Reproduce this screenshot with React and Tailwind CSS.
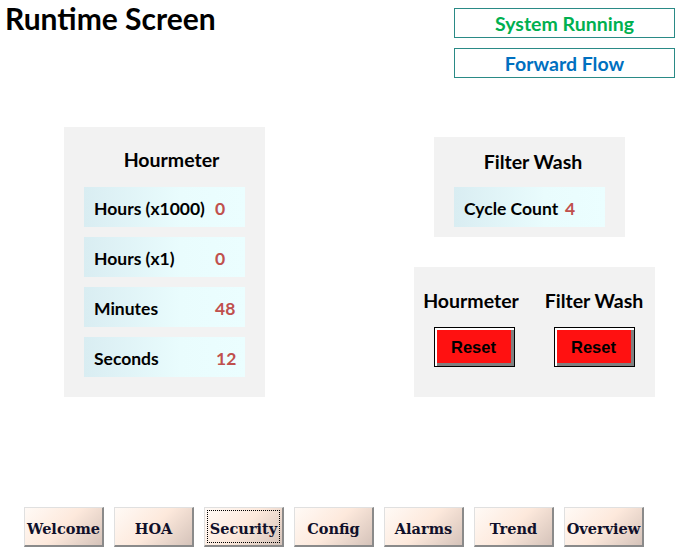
import React from "react";

const lato = { fontFamily: "Lato, 'Noto Sans', sans-serif" };

function Row({ label, value, valueLeft }) {
  return (
    <div className="h-[40px] flex items-center pt-[4px] bg-[linear-gradient(90deg,#d9edf2_0%,#e9fcfd_60%,#ebfeff_100%)] relative">
      <span className="pl-[10px] text-[17.5px] font-bold text-black">{label}</span>
      <span
        className="absolute text-[17.5px] font-bold text-[#c0504d]"
        style={{ left: valueLeft }}
      >
        {value}
      </span>
    </div>
  );
}

function ResetButton() {
  return (
    <div className="w-[81px] h-[40px] border border-black bg-[#808080] p-0">
      <div className="w-full h-full border-t-[2px] border-l-[2px] border-t-white border-l-white">
        <div className="w-[74px] h-[33px] bg-[#ff1111] flex items-center justify-center pt-[1px] text-[16.5px] font-bold text-black" style={{ fontFamily: "'Liberation Sans', Arial, sans-serif" }}>
          Reset
        </div>
      </div>
    </div>
  );
}

function NavButton({ label, focused }) {
  return (
    <div className="w-[80px] h-[40px] border-r-[2px] border-b-[2px] border-r-[#8a8a8a] border-b-[#8a8a8a] border-t border-l border-t-[#e0e0e0] border-l-[#e0e0e0] bg-[linear-gradient(135deg,#fffaf6_0%,#fde9dc_50%,#d5c3ba_100%)] p-[2px]">
      <div className={"w-full h-full flex items-center justify-center pt-[4px] text-[14.5px] font-bold text-[#10102a] " + (focused ? "border border-dotted border-black" : "")} style={{ fontFamily: "'DejaVu Serif', serif" }}>
        {label}
      </div>
    </div>
  );
}

export default function App() {
  return (
    <div className="w-[684px] h-[559px] bg-white flex flex-col overflow-hidden" style={lato}>
      <div className="h-[78px] flex justify-between">
        <div className="pl-[5px] pt-[1px] text-[30px] font-bold text-black leading-[34px]">Runtime Screen</div>
        <div className="mt-[8px] mr-[9px] flex flex-col gap-[10px]">
          <div className="w-[221px] h-[30px] border border-[#2a8a86] flex items-center justify-center pt-[2px] text-[19.5px] font-bold text-[#00b050]">
            System Running
          </div>
          <div className="w-[221px] h-[30px] border border-[#2a8a86] flex items-center justify-center pt-[2px] text-[19.5px] font-bold text-[#0070c0]">
            Forward Flow
          </div>
        </div>
      </div>

      <div className="flex mt-[49px]">
        <div className="ml-[64px] w-[201px] h-[270px] bg-[#f2f2f2] flex flex-col px-[20px]">
          <div className="h-[60px] flex items-center justify-center pl-[14px] pt-[5px] text-[19.5px] font-bold text-black">Hourmeter</div>
          <div className="flex flex-col gap-[10px]">
            <Row label="Hours (x1000)" value="0" valueLeft={131} />
            <Row label="Hours (x1)" value="0" valueLeft={131} />
            <Row label="Minutes" value="48" valueLeft={131} />
            <Row label="Seconds" value="12" valueLeft={132} />
          </div>
        </div>

        <div className="ml-[149px] flex flex-col">
          <div className="mt-[10px] ml-[20px] w-[191px] h-[100px] bg-[#f2f2f2] px-[20px] flex flex-col">
            <div className="h-[50px] flex items-center justify-center pl-[7px] text-[19.5px] font-bold text-black">Filter Wash</div>
            <Row label="Cycle Count" value="4" valueLeft={111} />
          </div>
          <div className="mt-[30px] w-[241px] h-[130px] bg-[#f2f2f2] flex">
            <div className="w-[120px] flex flex-col items-center">
              <div className="h-[28px] mt-[19px] pt-[2px] mr-[6px] flex items-center text-[19.5px] font-bold text-black">Hourmeter</div>
              <div className="mt-[13px]"><ResetButton /></div>
            </div>
            <div className="w-[120px] flex flex-col items-center">
              <div className="h-[28px] mt-[19px] pt-[2px] flex items-center text-[19.5px] font-bold text-black">Filter Wash</div>
              <div className="mt-[13px]"><ResetButton /></div>
            </div>
          </div>
        </div>
      </div>

      <div className="mt-auto mb-[12px] ml-[24px] flex gap-[10px]">
        <NavButton label="Welcome" />
        <NavButton label="HOA" />
        <NavButton label="Security" focused />
        <NavButton label="Config" />
        <NavButton label="Alarms" />
        <NavButton label="Trend" />
        <NavButton label="Overview" />
      </div>
    </div>
  );
}
